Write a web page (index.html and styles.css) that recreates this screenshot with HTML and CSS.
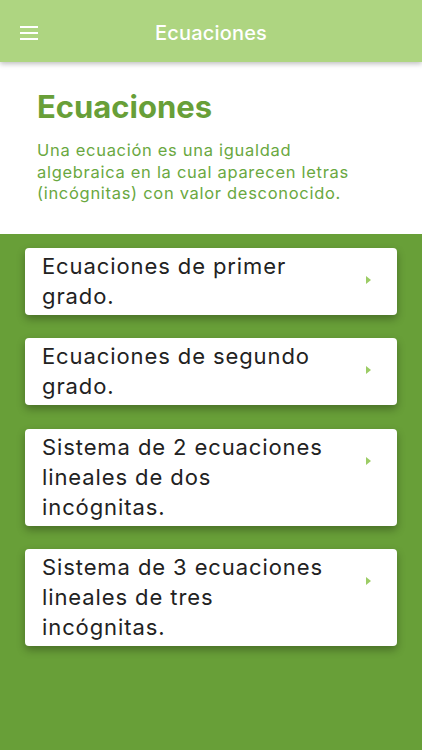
FILE: index.html
```html
<!DOCTYPE html>
<html lang="es">
<head>
    <meta charset="UTF-8">
    <title>Ecuaciones</title>
    <link rel="stylesheet" href="styles.css">
</head>
<body>

    <div class="topbar">
        <div class="menu-btn">
            <svg width="18" height="14" viewBox="0 0 18 14">
                <rect x="0" y="0" width="18" height="2" fill="#fff"/>
                <rect x="0" y="6" width="18" height="2" fill="#fff"/>
                <rect x="0" y="12" width="18" height="2" fill="#fff"/>
            </svg>
        </div>
        <div class="topbar-title">Ecuaciones</div>
    </div>

    <!-- Intro -->
    <div class="intro">
        <h1>Ecuaciones</h1>
        <p>Una ecuación es una igualdad algebraica en la cual aparecen letras (incógnitas) con valor desconocido.</p>
    </div>

    <!-- Topics list -->
    <div class="topics">
        <div class="topic">
            <div class="topic-text">Ecuaciones de primer grado.</div>
            <span class="chevron"></span>
        </div>
        <div class="topic">
            <div class="topic-text">Ecuaciones de segundo grado.</div>
            <span class="chevron"></span>
        </div>
        <div class="topic">
            <div class="topic-text">Sistema de 2 ecuaciones lineales de dos incógnitas.</div>
            <span class="chevron"></span>
        </div>
        <div class="topic">
            <div class="topic-text">Sistema de 3 ecuaciones lineales de tres incógnitas.</div>
            <span class="chevron"></span>
        </div>
    </div>

</body>
</html>
```

FILE: styles.css
```css
body {
    margin: 0;
    font-family: Inter, "Open Sans", sans-serif;
    background: #689f38;
    height: 750px;
    display: flex;
    flex-direction: column;
}

.topbar {
    height: 62px;
    background: #aed581;
    display: flex;
    align-items: center;
    position: relative;
    box-shadow: 0 2px 5px rgba(0, 0, 0, 0.25);
    z-index: 2;
}

.menu-btn {
    position: absolute;
    left: 20px;
    top: 26px;
    line-height: 0;
}

.topbar-title {
    flex: 1;
    text-align: center;
    color: #fff;
    font-size: 20px;
    font-weight: 500;
    letter-spacing: 0.2px;
    padding-top: 4px;
}

.intro {
    background: #fff;
    padding: 26px 20px 29px 37px;
}

.intro h1 {
    margin: 0 0 14px;
    color: #689f38;
    font-size: 31px;
    font-weight: 700;
    line-height: 38px;
}

.intro p {
    margin: 0;
    max-width: 330px;
    color: #6aa83f;
    font-size: 16.5px;
    letter-spacing: 0.7px;
    line-height: 21.5px;
}

.topics {
    flex: 1;
    padding: 14px 25px;
    display: flex;
    flex-direction: column;
    gap: 23.5px;
}

.topic {
    background: #fff;
    border-radius: 4px;
    box-shadow: 0 4px 8px rgba(0, 0, 0, 0.3);
    display: flex;
    padding: 3px 26px 4px 17px;
}

.topic-text {
    flex: 1;
    font-size: 22px;
    letter-spacing: 0.9px;
    line-height: 30px;
    color: #222;
    padding-right: 31px;
}

.chevron {
    width: 0;
    height: 0;
    margin-top: 25px;
    border-top: 4.5px solid transparent;
    border-bottom: 4.5px solid transparent;
    border-left: 5px solid #9ccc65;
}
```
